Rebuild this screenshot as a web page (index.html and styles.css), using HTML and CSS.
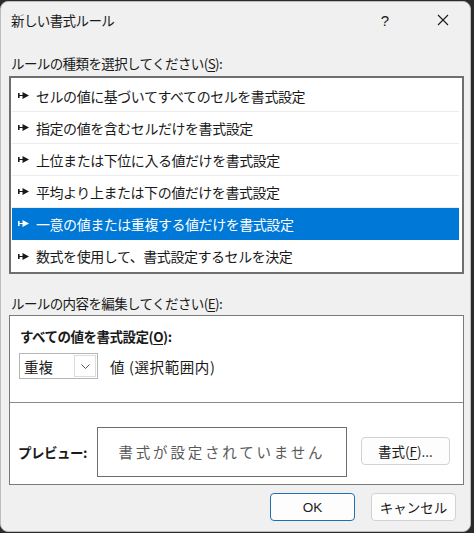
FILE: index.html
```html
<!DOCTYPE html>
<html lang="ja">
<head>
<meta charset="utf-8">
<title>新しい書式ルール</title>
<link rel="stylesheet" href="styles.css">
</head>
<body>
<div class="dialog">
  <div class="titlebar">
    <span class="title">新しい書式ルール</span>
    <span class="tb-btn">?</span>
    <span class="tb-btn close">
      <svg width="12" height="12" viewBox="0 0 12 12"><path d="M1 1L11 11M11 1L1 11" stroke="#1a1a1a" stroke-width="1.1" fill="none"/></svg>
    </span>
  </div>

  <div class="label first">ルールの種類を選択してください(<u>S</u>):</div>
  <ul class="listbox">
    <li><svg class="pt" viewBox="0 0 11 7"><path d="M0 1H1.6V2.9H4.5V0L11 3.5L4.5 7V4.1H1.6V6H0Z"/></svg>セルの値に基づいてすべてのセルを書式設定</li>
    <li><svg class="pt" viewBox="0 0 11 7"><path d="M0 1H1.6V2.9H4.5V0L11 3.5L4.5 7V4.1H1.6V6H0Z"/></svg>指定の値を含むセルだけを書式設定</li>
    <li><svg class="pt" viewBox="0 0 11 7"><path d="M0 1H1.6V2.9H4.5V0L11 3.5L4.5 7V4.1H1.6V6H0Z"/></svg>上位または下位に入る値だけを書式設定</li>
    <li><svg class="pt" viewBox="0 0 11 7"><path d="M0 1H1.6V2.9H4.5V0L11 3.5L4.5 7V4.1H1.6V6H0Z"/></svg>平均より上または下の値だけを書式設定</li>
    <li class="sel"><svg class="pt" viewBox="0 0 11 7"><path d="M0 1H1.6V2.9H4.5V0L11 3.5L4.5 7V4.1H1.6V6H0Z"/></svg>一意の値または重複する値だけを書式設定</li>
    <li><svg class="pt" viewBox="0 0 11 7"><path d="M0 1H1.6V2.9H4.5V0L11 3.5L4.5 7V4.1H1.6V6H0Z"/></svg>数式を使用して、書式設定するセルを決定</li>
  </ul>

  <div class="label second">ルールの内容を編集してください(<u>E</u>):</div>
  <div class="panel">
    <div class="upper">
      <div class="bold-label">すべての値を書式設定(<u>O</u>):</div>
      <div class="combo-row">
        <div class="combo">
          <span class="combo-text">重複</span>
          <span class="combo-btn">
            <svg width="9" height="5" viewBox="0 0 9 5"><path d="M0.5 0.5L4.5 4.5L8.5 0.5" stroke="#555" stroke-width="1" fill="none"/></svg>
          </span>
        </div>
        <span class="combo-after">値 (選択範囲内)</span>
      </div>
    </div>
    <div class="preview-row">
      <span class="bold-label">プレビュー:</span>
      <div class="preview">書式が設定されていません</div>
      <button class="btn fmt">書式(<u>F</u>)...</button>
    </div>
  </div>

  <div class="footer">
    <button class="btn ok">OK</button>
    <button class="btn">キャンセル</button>
  </div>
</div>
</body>
</html>
```

FILE: styles.css
```css
html, body {
  margin: 0;
  padding: 0;
}

body {
  width: 474px;
  height: 533px;
  background: #2a2a2a;
  font-family: "Noto Sans CJK JP", "Noto Sans", sans-serif;
  color: #1a1a1a;
  overflow: hidden;
}

.dialog {
  box-sizing: border-box;
  width: 471px;
  height: 531px;
  margin-top: 1px;
  background: #f0f0f0;
  border-radius: 8px;
  border: 1px solid #bdbdbd;
  overflow: hidden;
}

.titlebar {
  height: 36px;
  display: flex;
  align-items: center;
  padding-right: 4px;
}

.title {
  flex: 1;
  padding-left: 10px;
  font-size: 13.5px;
  letter-spacing: -0.6px;
}

.tb-btn {
  width: 46px;
  height: 36px;
  display: flex;
  align-items: center;
  justify-content: center;
  font-family: "Liberation Sans", sans-serif;
  font-size: 15px;
}

.tb-btn + .tb-btn {
  margin-left: 12px;
}

.label {
  font-size: 13.5px;
  line-height: 18px;
  padding-left: 10px;
  letter-spacing: -0.6px;
}

.label u, .bold-label u, .btn u {
  text-underline-offset: 2px;
}

.label.first {
  margin-top: 16px;
}

.label.second {
  margin-top: 20px;
}

.listbox {
  list-style: none;
  margin: 4px 0 0 8px;
  padding: 2px 2px 0 1px;
  width: 455px;
  box-sizing: border-box;
  border: 2px solid #6f6f6f;
  background: #fff;
}

.listbox li {
  height: 32px;
  box-sizing: border-box;
  display: flex;
  align-items: center;
  padding-left: 6px;
  font-size: 14px;
  letter-spacing: -0.45px;
  border-bottom: 1px solid #ececec;
  margin-right: 1px;
}

.listbox li:last-child {
  border-bottom: none;
}

.listbox li.sel {
  background: #0078d7;
  color: #fff;
  border-bottom-color: #0078d7;
}

.pt {
  width: 11px;
  height: 7px;
  margin-right: 7px;
  fill: #1a1a1a;
  flex: none;
}

.sel .pt {
  fill: #fff;
}

.panel {
  margin: 3px 0 0 8px;
  width: 455px;
  height: 170px;
  box-sizing: border-box;
  border: 1px solid #7a7a7a;
  background: #fff;
  display: flex;
  flex-direction: column;
}

.upper {
  height: 87px;
  border-bottom: 1px solid #8a8a8a;
  padding: 11px 0 0 10px;
  box-sizing: border-box;
}

.bold-label {
  font-weight: 700;
  font-size: 13.5px;
  line-height: 18px;
  letter-spacing: -0.5px;
}

.combo-row {
  display: flex;
  align-items: center;
  margin-top: 8px;
  margin-left: -1px;
}

.combo {
  box-sizing: border-box;
  width: 79px;
  height: 26px;
  border: 1px solid #b5b5b5;
  display: flex;
  align-items: center;
  justify-content: space-between;
  padding: 1px;
  background: #fff;
}

.combo-text {
  font-size: 14.5px;
  padding-left: 3px;
}

.combo-btn {
  width: 22px;
  height: 22px;
  box-sizing: border-box;
  border: 1px solid #dcdcdc;
  display: flex;
  align-items: center;
  justify-content: center;
}

.combo-after {
  margin-left: 12px;
  font-size: 14.5px;
  letter-spacing: 0.6px;
}

.preview-row {
  flex: 1;
  display: flex;
  align-items: center;
  padding: 17px 0 0 8px;
}

.preview {
  box-sizing: border-box;
  width: 250px;
  height: 50px;
  margin-left: 10px;
  border: 1px solid #6d6d6d;
  display: flex;
  align-items: center;
  justify-content: center;
  font-size: 14.5px;
  letter-spacing: 2.8px;
  color: #595959;
  padding-bottom: 2px;
}

.btn {
  box-sizing: border-box;
  height: 28px;
  background: #fdfdfd;
  border: 1px solid #d2d2d2;
  border-radius: 4px;
  font-family: "Noto Sans CJK JP", "Noto Sans", sans-serif;
  font-size: 13.5px;
  color: #1a1a1a;
  padding: 0;
}

.btn.fmt {
  width: 89px;
  margin-left: 14px;
  margin-top: -2px;
}

.footer {
  display: flex;
  justify-content: flex-end;
  gap: 16px;
  padding: 8px 14px 0 0;
}

.footer .btn {
  width: 85px;
}

.btn.ok {
  border-color: #1f6fb5;
  font-family: "Liberation Sans", sans-serif;
  font-size: 13.5px;
}
```
